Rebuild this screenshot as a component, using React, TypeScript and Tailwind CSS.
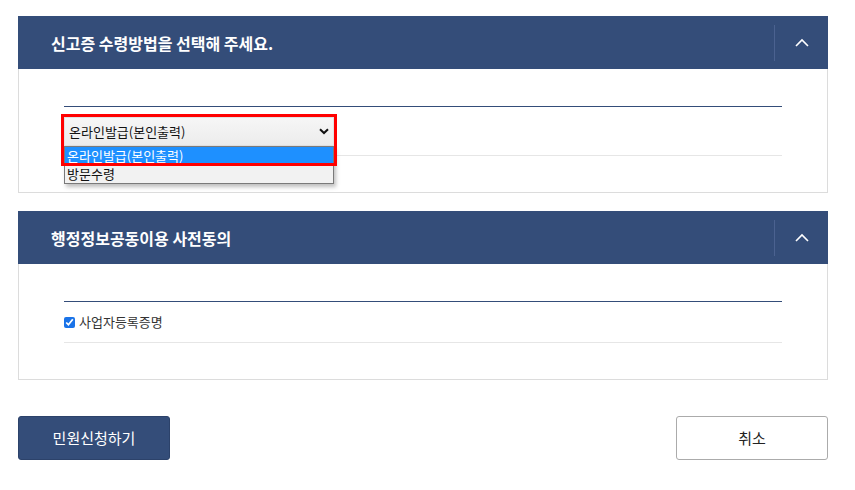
import React from "react"

const font = { fontFamily: '"Noto Sans CJK KR", "Noto Sans", sans-serif' }

const ChevronUp = () => (
  <svg width="14" height="9" viewBox="0 0 14 9" fill="none">
    <path d="M1 8 L7 2 L13 8" stroke="white" strokeWidth="1.6" />
  </svg>
)

const PanelHeader: React.FC<{ title: string }> = ({ title }) => (
  <div className="flex h-[53px] items-center bg-[#344d79]">
    <h2 className="flex-1 pl-[33px] text-[16px] font-bold text-white">{title}</h2>
    <div className="h-[36px] w-px bg-[#4b6290]" />
    <button className="flex h-full w-[53px] items-center justify-center">
      <ChevronUp />
    </button>
  </div>
)

export default function App() {
  return (
    <div className="min-h-[490px] bg-white px-[18px] pt-[16px] text-[#222]" style={font}>
      <section className="w-[810px]">
        <PanelHeader title="신고증 수령방법을 선택해 주세요." />
        <div className="border border-t-0 border-[#dcdcdc] px-[45px] pt-[37px] pb-[36px]">
          <div className="border-t border-[#344d79]">
            <div className="border-b border-[#e6e6e6] pt-[10px] pb-[9px]">
              <div className="relative w-[270px]">
                <div className="pointer-events-none absolute -inset-[3px] bottom-[-20px] z-20 border-[3px] border-[#ff0000]" />
                <div className="flex h-[29px] items-center justify-between border border-[#e2e2e2] bg-gradient-to-b from-[#f6f6f6] to-[#ececec] pl-[4px] pr-[4px] text-[13px] text-[#111]">
                  <span>온라인발급(본인출력)</span>
                  <svg width="10" height="7" viewBox="0 0 10 7">
                    <path d="M1 1.2 L5 5 L9 1.2" stroke="#111" strokeWidth="2" fill="none" />
                  </svg>
                </div>
                <div className="absolute left-0 top-[29px] z-10 w-[270px] border border-[#7a7a7a] bg-[#f2f2f2] text-[13px] leading-[17px] shadow-[2px_3px_4px_rgba(0,0,0,0.25)]">
                  <div className="h-[17px] bg-[#1e90ff] pl-[2px] text-white">온라인발급(본인출력)</div>
                  <div className="h-[19px] pl-[2px] pt-[1px] text-[#111]">방문수령</div>
                </div>
              </div>
            </div>
          </div>
        </div>
      </section>

      <section className="mt-[18px] w-[810px]">
        <PanelHeader title="행정정보공동이용 사전동의" />
        <div className="border border-t-0 border-[#dcdcdc] px-[45px] pt-[37px] pb-[36px]">
          <div className="border-t border-[#344d79]">
            <label className="flex h-[41px] items-center gap-[4px] border-b border-[#e6e6e6] text-[13px] text-[#333]">
              <input type="checkbox" defaultChecked className="m-0 h-[11px] w-[11px] accent-[#1a73e8]" />
              <span>사업자등록증명</span>
            </label>
          </div>
        </div>
      </section>

      <div className="mt-[36px] flex w-[810px] justify-between">
        <button className="h-[44px] w-[152px] rounded-[3px] border border-[#2c426a] bg-[#344d79] text-[15px] text-white">
          민원신청하기
        </button>
        <button className="h-[44px] w-[152px] rounded-[3px] border border-[#ababab] bg-white text-[15px] text-[#222]">
          취소
        </button>
      </div>
    </div>
  )
}
